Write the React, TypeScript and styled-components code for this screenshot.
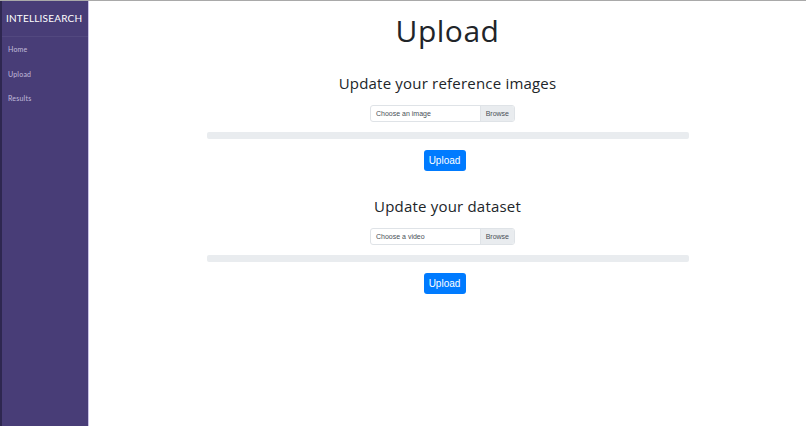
import styled, { createGlobalStyle } from 'styled-components'

const Global = createGlobalStyle`
  html, body { margin: 0; padding: 0; background: #fff; }
  body { font-family: "Noto Sans", "Liberation Sans", sans-serif; }
  * { box-sizing: border-box; }
`

const Page = styled.div`
  display: flex;
  height: 426px;
  border-top: 1px solid #a9a9a9;
`

const Sidebar = styled.nav`
  width: 89px;
  flex-shrink: 0;
  background: #483d77;
  border-left: 2px solid #2e2750;
  border-right: 1px solid #c9c3e6;
  display: flex;
  flex-direction: column;
`

const Brand = styled.div`
  font-family: Lato, "Liberation Sans", sans-serif;
  color: #fff;
  font-size: 10px;
  letter-spacing: 0.2px;
  padding: 11px 0 12px 4px;
  border-bottom: 1px solid rgba(255, 255, 255, 0.06);
  white-space: nowrap;
`

const NavList = styled.ul`
  list-style: none;
  margin: 0;
  padding: 7px 0 0 6px;
  display: flex;
  flex-direction: column;
  gap: 14.5px;
`

const NavItem = styled.li`
  font-family: Lato, "Liberation Sans", sans-serif;
  font-size: 7px;
  letter-spacing: 0.2px;
  color: #c2bcdc;
  line-height: 10px;
`

const Main = styled.main`
  flex: 1;
  display: flex;
  flex-direction: column;
  align-items: center;
`

const Title = styled.h1`
  font-family: "Open Sans", "Liberation Sans", sans-serif;
  font-weight: 400;
  font-size: 30px;
  color: #212529;
  margin: 12px 0 0;
  line-height: 36px;
  letter-spacing: 0.5px;
`

const Section = styled.section<{ top: number }>`
  display: flex;
  flex-direction: column;
  align-items: center;
  width: 482px;
  margin-top: ${({ top }) => top}px;
`

const Heading = styled.h2`
  font-family: "Open Sans", "Liberation Sans", sans-serif;
  font-weight: 400;
  font-size: 15px;
  color: #212529;
  margin: 0;
  line-height: 20px;
  letter-spacing: 0.2px;
`

const FileInput = styled.div`
  display: flex;
  width: 145px;
  height: 17px;
  margin: 12px 10px 0 0;
  border: 1px solid #dfe3e7;
  border-radius: 3px;
  overflow: hidden;
  font-family: "Liberation Sans", Arial, sans-serif;
  font-size: 7px;
  color: #495057;
`

const FileLabel = styled.span`
  flex: 1;
  display: flex;
  align-items: center;
  padding-left: 5px;
`

const Browse = styled.span`
  display: flex;
  align-items: center;
  padding: 0 5px;
  background: #e9ecef;
  border-left: 1px solid #dfe3e7;
`

const Progress = styled.div`
  width: 482px;
  height: 7px;
  margin-top: 10px;
  background: #e9ecef;
  border-radius: 2px;
`

const Button = styled.button`
  margin: 11px 6px 0 0;
  width: 42px;
  height: 21px;
  border: none;
  border-radius: 3px;
  background: #007bff;
  color: #fff;
  font-family: "Liberation Sans", Arial, sans-serif;
  font-size: 10px;
  padding: 0;
`

const uploads = [
  { heading: 'Update your reference images', label: 'Choose an image', top: 24 },
  { heading: 'Update your dataset', label: 'Choose a video', top: 25 },
]

export default function App() {
  return (
    <>
      <Global />
      <Page>
        <Sidebar>
          <Brand>INTELLISEARCH</Brand>
          <NavList>
            <NavItem>Home</NavItem>
            <NavItem>Upload</NavItem>
            <NavItem>Results</NavItem>
          </NavList>
        </Sidebar>
        <Main>
          <Title>Upload</Title>
          {uploads.map(u => (
            <Section key={u.label} top={u.top}>
              <Heading>{u.heading}</Heading>
              <FileInput>
                <FileLabel>{u.label}</FileLabel>
                <Browse>Browse</Browse>
              </FileInput>
              <Progress />
              <Button>Upload</Button>
            </Section>
          ))}
        </Main>
      </Page>
    </>
  )
}
